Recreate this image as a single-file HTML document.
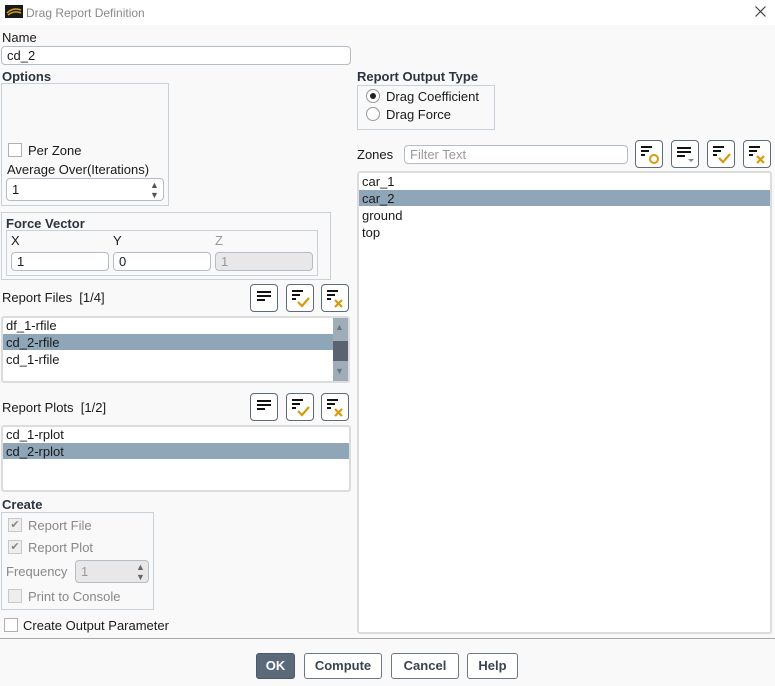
<!DOCTYPE html>
<html><head><meta charset="utf-8"><style>
*{box-sizing:border-box;margin:0;padding:0}
body{width:775px;height:686px;overflow:hidden;background:#f9f9f9;font-family:"Liberation Sans","Noto Sans CJK KR",sans-serif;font-size:13px;color:#1a1a1a;position:relative}
.a{position:absolute}
.t{position:absolute;line-height:16px;white-space:nowrap;margin-top:1px}
.b{font-weight:bold;color:#2c3440}
.box{position:absolute;border:1px solid #c8d0da}
.inp{position:absolute;border:1px solid #b4bcc6;border-radius:4px;background:#fff;padding-left:5px;line-height:17px}
.cb{position:absolute;width:14px;height:14px;border:1px solid #b0b0b0;background:#fff}
.btn{position:absolute;width:28px;height:28px;border:1px solid #5f6b78;border-radius:4px;background:#fff}
.list{position:absolute;border:2px solid #dcdcdc;border-radius:3px;background:#fff}
.sel{position:absolute;background:#8fa5b8;height:16px}
.pb{position:absolute;top:653px;height:26px;border:1px solid #6d7884;border-radius:3px;background:#fff;font-weight:bold;color:#3a4450;text-align:center;line-height:24px;font-size:13px}
</style></head><body>
<div class="a" style="left:0;top:0;width:775px;height:25px;background:#fff"></div>
<svg class="a" style="left:5px;top:5px" width="18" height="13"><rect width="18" height="13" fill="#1a1a1a"/><path d="M2 8 Q8 2 16 5 M3 10 Q9 5 16 8" stroke="#d4a020" stroke-width="1.5" fill="none"/></svg>
<div class="t" style="left:26px;top:4px;color:#8a8a8a;font-size:12px">Drag Report Definition</div>
<svg class="a" style="left:755px;top:6px" width="11" height="11"><path d="M0.5 0.5 L10.5 10.5 M10.5 0.5 L0.5 10.5" stroke="#444" stroke-width="1.2"/></svg>

<div class="t" style="left:2px;top:29px">Name</div>
<div class="inp" style="left:1px;top:46px;width:350px;height:19px">cd_2</div>
<div class="t b" style="left:2px;top:68px">Options</div>
<div class="box" style="left:1px;top:83px;width:168px;height:123px"></div>
<div class="cb" style="left:8px;top:143px"></div>
<div class="t" style="left:28px;top:142px">Per Zone</div>
<div class="t" style="left:7px;top:161px">Average Over(Iterations)</div>
<div class="inp" style="left:6px;top:178px;width:158px;height:23px;line-height:21px">1</div>
<div class="t" style="left:150px;top:179px;font-size:9px;color:#555;line-height:10px">▲<br>▼</div>

<div class="box" style="left:1px;top:212px;width:330px;height:68px"></div>
<div class="t b" style="left:6px;top:215px">Force Vector</div>
<div class="box" style="left:6px;top:230px;width:312px;height:46px"></div>
<div class="t" style="left:11px;top:232px">X</div>
<div class="t" style="left:113px;top:232px">Y</div>
<div class="t" style="left:215px;top:232px;color:#999">Z</div>
<div class="inp" style="left:11px;top:252px;width:98px;height:19px">1</div>
<div class="inp" style="left:113px;top:252px;width:98px;height:19px">0</div>
<div class="inp" style="left:215px;top:252px;width:98px;height:19px;background:#e8e8e8;color:#999">1</div>

<div class="t" style="left:2px;top:289px">Report Files&nbsp; [1/4]</div>
<div class="btn" style="left:250px;top:284px"></div><div class="btn" style="left:286px;top:284px"></div><div class="btn" style="left:321px;top:284px"></div>
<div class="list" style="left:1px;top:316px;width:349px;height:67px"></div>
<div class="sel" style="left:3px;top:334px;width:330px"></div>
<div class="t" style="left:6px;top:317px">df_1-rfile</div>
<div class="t" style="left:6px;top:334px">cd_2-rfile</div>
<div class="t" style="left:6px;top:351px">cd_1-rfile</div>
<div class="a" style="left:333px;top:318px;width:15px;height:63px;background:#9fadb8"></div>
<div class="a" style="left:333px;top:341px;width:15px;height:20px;background:#5b6373"></div>
<div class="t" style="left:335px;top:318px;font-size:9px;color:#6a7684">▲</div>
<div class="t" style="left:335px;top:362px;font-size:9px;color:#6a7684">▼</div>

<div class="t" style="left:2px;top:399px">Report Plots&nbsp; [1/2]</div>
<div class="btn" style="left:250px;top:393px"></div><div class="btn" style="left:286px;top:393px"></div><div class="btn" style="left:321px;top:393px"></div>
<div class="list" style="left:1px;top:425px;width:350px;height:67px"></div>
<div class="sel" style="left:3px;top:443px;width:346px"></div>
<div class="t" style="left:6px;top:426px">cd_1-rplot</div>
<div class="t" style="left:6px;top:443px">cd_2-rplot</div>

<div class="t b" style="left:2px;top:496px">Create</div>
<div class="box" style="left:1px;top:512px;width:153px;height:98px"></div>
<div class="cb" style="left:8px;top:518px;background:#eee;border-color:#c8c8c8;font-size:11px;line-height:12px;text-align:center;color:#888">✔</div>
<div class="t" style="left:28px;top:517px;color:#888">Report File</div>
<div class="cb" style="left:8px;top:540px;background:#eee;border-color:#c8c8c8;font-size:11px;line-height:12px;text-align:center;color:#888">✔</div>
<div class="t" style="left:28px;top:539px;color:#888">Report Plot</div>
<div class="t" style="left:6px;top:563px;color:#888">Frequency</div>
<div class="inp" style="left:75px;top:560px;width:74px;height:23px;line-height:21px;background:#e8e8e8;color:#999">1</div>
<div class="t" style="left:136px;top:561px;font-size:9px;color:#666;line-height:10px">▲<br>▼</div>
<div class="cb" style="left:8px;top:589px;background:#eee;border-color:#c8c8c8"></div>
<div class="t" style="left:28px;top:588px;color:#888">Print to Console</div>
<div class="cb" style="left:4px;top:618px"></div>
<div class="t" style="left:23px;top:617px">Create Output Parameter</div>

<div class="t b" style="left:357px;top:68px">Report Output Type</div>
<div class="box" style="left:357px;top:85px;width:138px;height:45px"></div>
<div class="a" style="left:366px;top:89px;width:14px;height:14px;border:1px solid #999;border-radius:50%;background:#fff"></div>
<div class="a" style="left:370px;top:93px;width:6px;height:6px;border-radius:50%;background:#222"></div>
<div class="t" style="left:386px;top:88px">Drag Coefficient</div>
<div class="a" style="left:366px;top:107px;width:14px;height:14px;border:1px solid #999;border-radius:50%;background:#fff"></div>
<div class="t" style="left:386px;top:106px">Drag Force</div>

<div class="t" style="left:357px;top:146px">Zones</div>
<div class="inp" style="left:404px;top:145px;width:224px;height:19px;color:#999">Filter Text</div>
<div class="btn" style="left:635px;top:140px"></div><div class="btn" style="left:671px;top:140px"></div><div class="btn" style="left:707px;top:140px"></div><div class="btn" style="left:743px;top:140px"></div>
<div class="list" style="left:357px;top:171px;width:415px;height:463px"></div>
<div class="sel" style="left:359px;top:190px;width:411px"></div>
<div class="t" style="left:362px;top:173px">car_1</div>
<div class="t" style="left:362px;top:190px">car_2</div>
<div class="t" style="left:362px;top:207px">ground</div>
<div class="t" style="left:362px;top:224px">top</div>

<svg class="a" style="left:0;top:0" width="775" height="686">
<defs>
<g id="l"><rect x="0" y="0" width="14" height="2" fill="#111"/><rect x="0" y="4" width="14" height="2" fill="#111"/><rect x="0" y="8" width="8" height="2" fill="#111"/></g>
<g id="s"><rect x="0" y="0" width="11" height="2" fill="#111"/><rect x="0" y="4" width="8" height="2" fill="#111"/><rect x="0" y="8" width="4" height="2" fill="#111"/></g>
<path id="c" d="M0 4 L4 8 L11 0" stroke="#d99a0c" stroke-width="2.2" fill="none"/>
<path id="x" d="M0 0 L7 7 M7 0 L0 7" stroke="#d99a0c" stroke-width="2.2" fill="none"/>
</defs>
<use href="#l" x="257" y="291"/><use href="#s" x="292" y="290"/><use href="#c" x="298" y="298"/><use href="#s" x="327" y="290"/><use href="#x" x="335" y="300"/>
<use href="#l" x="257" y="400"/><use href="#s" x="292" y="399"/><use href="#c" x="298" y="407"/><use href="#s" x="327" y="399"/><use href="#x" x="335" y="409"/>
<use href="#s" x="641" y="146"/><circle cx="654" cy="159" r="4" stroke="#d99a0c" stroke-width="2" fill="none"/>
<use href="#l" x="677" y="147"/><path d="M688 159 L694 159 L691 162Z" fill="#888"/>
<use href="#s" x="713" y="146"/><use href="#c" x="719" y="154"/>
<use href="#s" x="749" y="146"/><use href="#x" x="757" y="156"/>
</svg>

<div class="a" style="left:0;top:638px;width:775px;height:1px;background:#a8a8a8"></div>
<div class="pb" style="left:256px;width:39px;background:#5a6a7b;color:#fff;border-color:#4a5868">OK</div>
<div class="pb" style="left:304px;width:78px">Compute</div>
<div class="pb" style="left:391px;width:68px">Cancel</div>
<div class="pb" style="left:467px;width:51px">Help</div>
</body></html>
